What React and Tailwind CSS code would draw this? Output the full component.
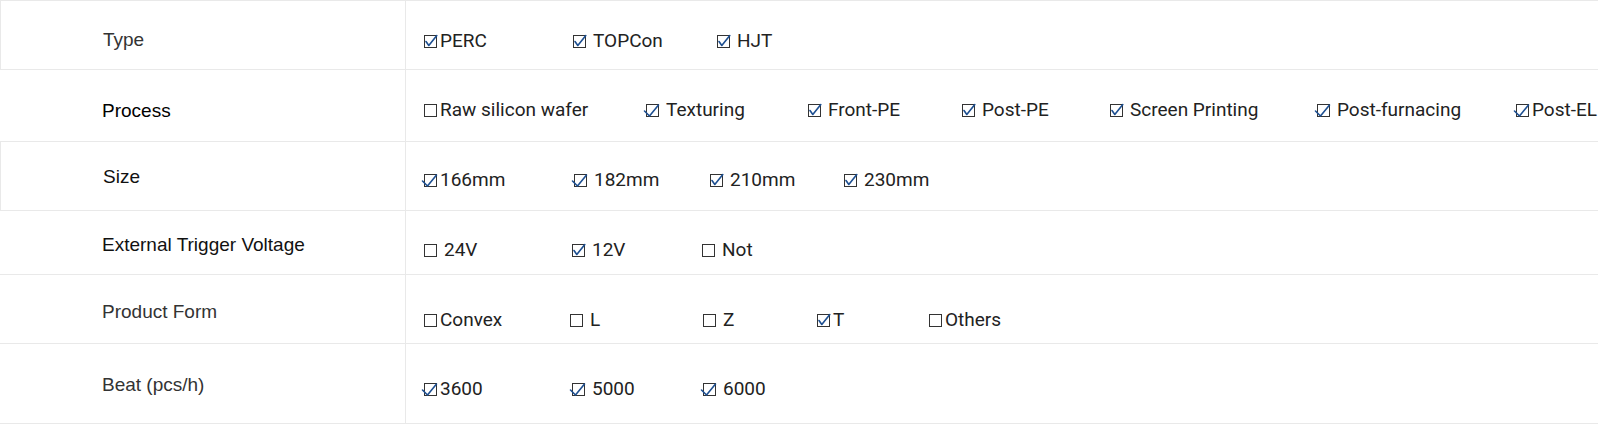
import React from 'react'

// spec table: label column + checkbox options
const ROWS = [
  {
    label: 'Type', tone: 'text-[#333]', h: 'h-[69px]', lpt: 'pt-[30px]', opt: 'pt-[31px]', edge: true,
    items: [
      { t: 'PERC', on: true, sp: false, w: 'w-[149px]' },
      { t: 'TOPCon', on: true, sp: true, w: 'w-[144px]' },
      { t: 'HJT', on: true, sp: true },
    ],
  },
  {
    label: 'Process', tone: 'text-[#000]', h: 'h-[72px]', lpt: 'pt-[32px]', opt: 'pt-[31px]',
    items: [
      { t: 'Raw silicon wafer', on: false, sp: false, w: 'w-[222px]' },
      { t: 'Texturing', on: true, sp: true, w: 'w-[162px]', lean: true },
      { t: 'Front-PE', on: true, sp: true, w: 'w-[154px]' },
      { t: 'Post-PE', on: true, sp: true, w: 'w-[148px]' },
      { t: 'Screen Printing', on: true, sp: true, w: 'w-[207px]' },
      { t: 'Post-furnacing', on: true, sp: true, w: 'w-[199px]', lean: true },
      { t: 'Post-EL', on: true, sp: false, lean: true },
    ],
  },
  {
    label: 'Size', tone: 'text-[#111]', h: 'h-[69px]', lpt: 'pt-[26px]', opt: 'pt-[29px]', edge: true,
    items: [
      { t: '166mm', on: true, sp: false, w: 'w-[150px]', lean: true },
      { t: '182mm', on: true, sp: true, w: 'w-[136px]', lean: true },
      { t: '210mm', on: true, sp: true, w: 'w-[134px]' },
      { t: '230mm', on: true, sp: true },
    ],
  },
  {
    label: 'External Trigger Voltage', tone: 'text-[#111]', h: 'h-[64px]', lpt: 'pt-[25px]', opt: 'pt-[30px]',
    items: [
      { t: '24V', on: false, sp: true, w: 'w-[148px]' },
      { t: '12V', on: true, sp: true, w: 'w-[130px]' },
      { t: 'Not', on: false, sp: true },
    ],
  },
  {
    label: 'Product Form', tone: 'text-[#333]', h: 'h-[69px]', lpt: 'pt-[28px]', opt: 'pt-[36px]',
    items: [
      { t: 'Convex', on: false, sp: false, w: 'w-[146px]' },
      { t: 'L', on: false, sp: true, w: 'w-[133px]' },
      { t: 'Z', on: false, sp: true, w: 'w-[114px]' },
      { t: 'T', on: true, sp: false, w: 'w-[112px]' },
      { t: 'Others', on: false, sp: false },
    ],
  },
  {
    label: 'Beat (pcs/h)', tone: 'text-[#333]', h: 'h-[80px]', lpt: 'pt-[32px]', opt: 'pt-[36px]',
    items: [
      { t: '3600', on: true, sp: false, w: 'w-[148px]', lean: true },
      { t: '5000', on: true, sp: true, w: 'w-[131px]', lean: true },
      { t: '6000', on: true, sp: true, lean: true },
    ],
  },
]

function Box({ on, lean }) {
  return (
    <svg width="13" height="13" viewBox="0 0 13 13" className="shrink-0 overflow-visible">
      <rect x="0.5" y="0.5" width="12" height="12" fill="none" stroke="#333" strokeWidth="1" />
      {on && (
        <path
          d={lean ? 'M-1.5 7 L3.5 12 L12.5 1' : 'M2 6.5 L4.8 10.5 L12.8 0.5'}
          fill="none" stroke="#1d4f91" strokeWidth="1.6" strokeLinecap="round" strokeLinejoin="round"
        />
      )}
    </svg>
  )
}

function Option({ item }) {
  return (
    <div className={`flex items-center shrink-0 whitespace-nowrap ${item.w || ''}`}>
      <Box on={item.on} lean={item.lean} />
      <span className={item.sp ? 'ml-[7px]' : 'ml-[3px]'}>{item.t}</span>
    </div>
  )
}

export default function App() {
  return (
    <div className="w-full min-h-[427px] bg-white overflow-hidden">
      <div className="border-t border-[#e9e9e9]">
        {ROWS.map((r) => (
          <div key={r.label} className={`flex border-b border-[#e9e9e9] ${r.h}`}>
            <div
              className={`w-[405px] shrink-0 pl-[102px] ${r.lpt} ${r.edge ? 'border-l border-[#e9e9e9]' : ''} ${r.tone} text-[19px] leading-[18px]`}
              style={{ fontFamily: '"Liberation Sans", Arial, sans-serif' }}
            >
              {r.label}
            </div>
            <div
              className={`flex-1 min-w-0 flex items-start border-l border-[#e9e9e9] pl-[18px] ${r.opt} text-[19px] leading-[18px] text-[#222]`}
              style={{ fontFamily: 'Roboto, "Noto Sans", sans-serif' }}
            >
              {r.items.map((it) => <Option key={it.t} item={it} />)}
            </div>
          </div>
        ))}
      </div>
    </div>
  )
}
